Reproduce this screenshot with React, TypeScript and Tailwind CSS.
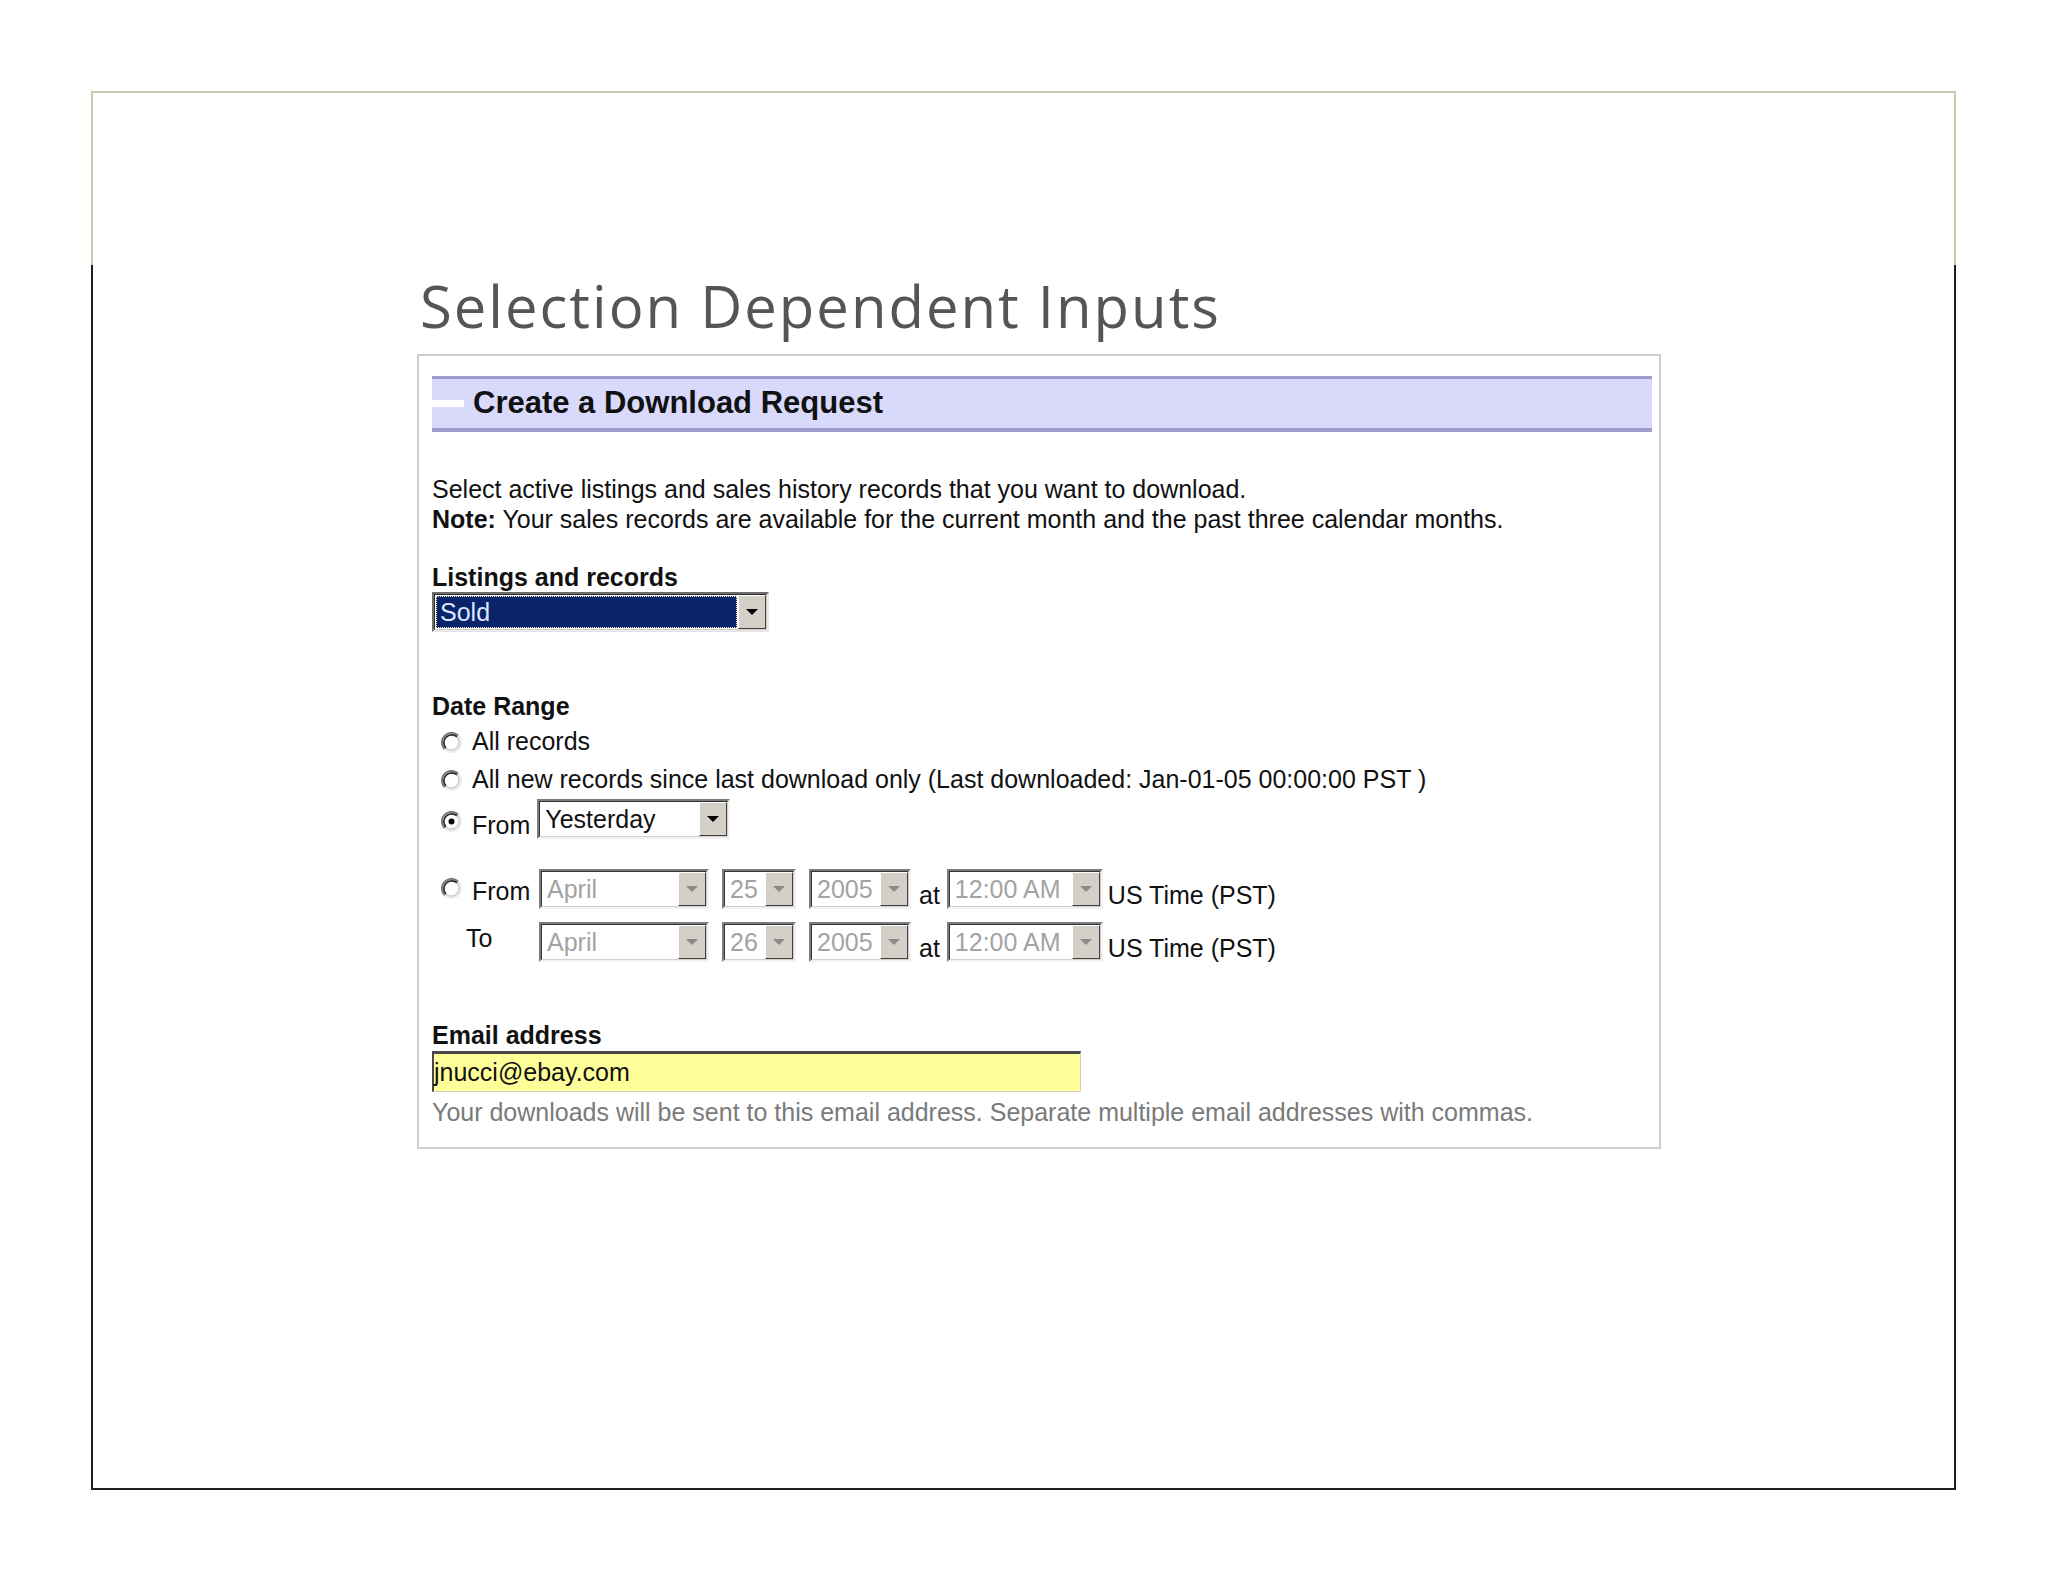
import type { ReactNode } from 'react';

const sans = { fontFamily: '"Liberation Sans", Arial, sans-serif' };

function Arrow({ color = '#000000' }: { color?: string }) {
  return (
    <svg width="12" height="6" viewBox="0 0 12 6">
      <path d="M0 0 H12 L6 6 Z" fill={color} />
    </svg>
  );
}

function DropButton({ disabled }: { disabled?: boolean }) {
  return (
    <div className="flex h-full w-[28px] shrink-0 items-center justify-center border border-t-white border-l-white border-b-[#404040] border-r-[#404040] bg-[#d4d0c8]">
      <Arrow color={disabled ? '#8a8a8a' : '#000000'} />
    </div>
  );
}

function Select({ className, children, disabled }: { className: string; children: ReactNode; disabled?: boolean }) {
  return (
    <div className={`flex h-[40px] shrink-0 border-2 border-t-[#7c7c7c] border-l-[#7c7c7c] border-b-[#f2f2f2] border-r-[#f2f2f2] ${className}`}>
      <div className="flex flex-1 border border-t-[#333333] border-l-[#333333] border-b-[#d4d0c8] border-r-[#d4d0c8] bg-white">
        <span className={`flex-1 truncate pl-[5px] leading-[34px] ${disabled ? 'text-[#a3a3a3]' : 'text-[#111111]'}`}>{children}</span>
        <DropButton disabled={disabled} />
      </div>
    </div>
  );
}

function Radio({ checked }: { checked?: boolean }) {
  return (
    <svg width="21" height="21" viewBox="0 0 12 12" className="shrink-0">
      <circle cx="6" cy="6" r="5" fill="#ffffff" />
      <path d="M2.11 9.89 A5.5 5.5 0 0 1 9.89 2.11" fill="none" stroke="#7a7a7a" strokeWidth="1.1" />
      <path d="M9.89 2.11 A5.5 5.5 0 0 1 2.11 9.89" fill="none" stroke="#eeeeee" strokeWidth="1.1" />
      <path d="M2.82 9.18 A4.5 4.5 0 0 1 9.18 2.82" fill="none" stroke="#2e2e2e" strokeWidth="1" />
      <path d="M9.18 2.82 A4.5 4.5 0 0 1 2.82 9.18" fill="none" stroke="#d4d0c8" strokeWidth="1" />
      {checked && <circle cx="6" cy="6" r="1.7" fill="#000000" />}
    </svg>
  );
}

function DateRow({ label, radio, day }: { label: string; radio?: boolean; day: string }) {
  return (
    <div className="flex h-[40px] items-start">
      <div className="flex h-full w-[107px] shrink-0 items-start">
        {radio ? (
          <>
            <div className="ml-[9px] mt-[9px]">
              <Radio />
            </div>
            <span className="ml-[10px] mt-[7px] leading-[30px]">{label}</span>
          </>
        ) : (
          <span className="ml-[34px] mt-[1px] leading-[30px]">{label}</span>
        )}
      </div>
      <Select className="w-[170px]" disabled>April</Select>
      <Select className="ml-[13px] w-[74px]" disabled>{day}</Select>
      <Select className="ml-[13px] w-[102px]" disabled>2005</Select>
      <span className="ml-[8px] mt-[11px] leading-[30px]">at</span>
      <Select className="ml-[7px] w-[156px]" disabled>12:00 AM</Select>
      <span className="ml-[5px] mt-[11px] leading-[30px]">US Time (PST)</span>
    </div>
  );
}

export default function App() {
  return (
    <div className="h-[1582px] w-[2048px] bg-white pt-[91px] pl-[91px]">
      <div className="flex h-[1399px] w-[1865px] flex-col">
        <div className="h-[174px] border-x-2 border-t-2 border-[#c9c9b3]" />
        <div className="flex-1 border-x-2 border-b-2 border-[#1e1e1e] pl-[324px] pt-[12px]">
          <h1
            className="ml-[3px] text-[58px] leading-[58px] font-medium tracking-[2px] text-[#555555]"
            style={{ fontFamily: '"Open Sans", "Noto Sans", sans-serif' }}
          >
            Selection Dependent Inputs
          </h1>

          <div
            className="mt-[19px] h-[795px] w-[1244px] border-2 border-[#cdcdcd] bg-white pt-[20px] pl-[13px] pr-[7px] text-[25px] text-[#111111]"
            style={sans}
          >
            <div className="flex h-[56px] items-center border-t-[3px] border-b-4 border-[#9c9cd0] bg-[#d9dafb]">
              <div className="h-[7px] w-[32px] bg-white" />
              <span className="ml-[9px] text-[31px] font-bold text-[#111111]">Create a Download Request</span>
            </div>

            <p className="mt-[42px] leading-[30px]">
              Select active listings and sales history records that you want to download.
              <br />
              <b>Note:</b> Your sales records are available for the current month and the past three calendar months.
            </p>

            <div className="mt-[28px] font-bold leading-[30px]">Listings and records</div>
            <div className="flex h-[40px] w-[337px] border-2 border-t-[#6e6e6e] border-l-[#6e6e6e] border-b-[#e6e6e6] border-r-[#e6e6e6]">
              <div className="flex flex-1 border border-t-[#2e2e2e] border-l-[#2e2e2e] border-b-[#d4d0c8] border-r-[#d4d0c8] bg-white">
                <div className="m-[1px] flex-1 border border-dotted border-[#f3e9b5] bg-[#0a246a] pl-[3px] leading-[30px] text-[#dde4ff]">
                  Sold
                </div>
                <DropButton />
              </div>
            </div>

            <div className="mt-[59px] font-bold leading-[30px]">Date Range</div>
            <div className="mt-[2px] flex h-[38px] items-center">
              <div className="ml-[9px]">
                <Radio />
              </div>
              <span className="ml-[10px]">All records</span>
            </div>
            <div className="flex h-[38px] items-center">
              <div className="ml-[9px]">
                <Radio />
              </div>
              <span className="ml-[10px]">All new records since last download only (Last downloaded: Jan-01-05 00:00:00 PST )</span>
            </div>
            <div className="flex h-[40px] items-start">
              <div className="ml-[9px] mt-[12px]">
                <Radio checked />
              </div>
              <span className="ml-[10px] mt-[11px] leading-[30px]">From</span>
              <Select className="ml-[7px] w-[193px]">Yesterday</Select>
            </div>

            <div className="mt-[30px]">
              <DateRow label="From" radio day="25" />
            </div>
            <div className="mt-[13px]">
              <DateRow label="To" day="26" />
            </div>

            <div className="mt-[58px] font-bold leading-[30px]">Email address</div>
            <div className="mt-[1px] h-[41px] w-[649px] border-t-[3px] border-l-2 border-b border-r border-t-[#484848] border-l-[#484848] border-b-[#d4d0c8] border-r-[#d4d0c8] bg-[#ffff99] leading-[36px]">
              jnucci@ebay.com
            </div>
            <div className="mt-[5px] leading-[30px] text-[#7a7a7a]">
              Your downloads will be sent to this email address. Separate multiple email addresses with commas.
            </div>
          </div>
        </div>
      </div>
    </div>
  );
}
